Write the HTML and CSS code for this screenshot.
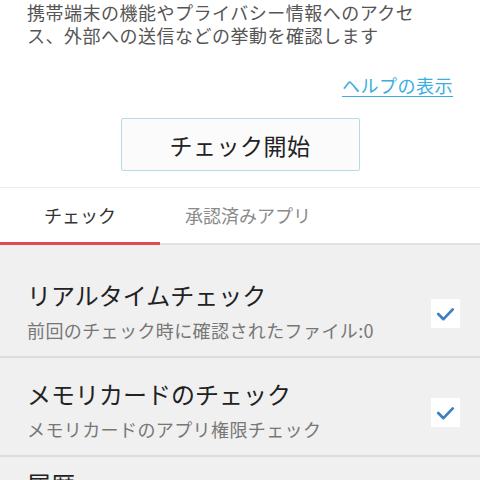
FILE: index.html
```html
<!DOCTYPE html>
<html lang="ja">
<head>
<meta charset="utf-8">
<link rel="stylesheet" href="styles.css">
</head>
<body>
<div class="page">
  <p class="intro">携帯端末の機能やプライバシー情報へのアクセス、外部への送信などの挙動を確認します</p>
  <div class="help-row"><a class="help" href="#">ヘルプの表示</a></div>
  <div class="btn-row"><button class="start">チェック開始</button></div>
  <div class="tabs">
    <div class="tab active">チェック</div>
    <div class="tab">承認済みアプリ</div>
  </div>
  <div class="list">
    <div class="item">
      <div class="texts">
        <div class="title">リアルタイムチェック</div>
        <div class="sub">前回のチェック時に確認されたファイル:0</div>
      </div>
      <div class="check"><svg viewBox="0 0 28 28" width="29" height="29"><polyline points="7,14.5 12,19.5 21,10" fill="none" stroke="#3d7fc1" stroke-width="2.6" stroke-linecap="round" stroke-linejoin="round"/></svg></div>
    </div>
    <div class="item">
      <div class="texts">
        <div class="title">メモリカードのチェック</div>
        <div class="sub">メモリカードのアプリ権限チェック</div>
      </div>
      <div class="check"><svg viewBox="0 0 28 28" width="29" height="29"><polyline points="7,14.5 12,19.5 21,10" fill="none" stroke="#3d7fc1" stroke-width="2.6" stroke-linecap="round" stroke-linejoin="round"/></svg></div>
    </div>
    <div class="item last">
      <div class="texts">
        <div class="title">履歴</div>
      </div>
    </div>
  </div>
</div>
</body>
</html>
```
FILE: styles.css
```css
html, body {
  margin: 0;
  padding: 0;
  background: #ffffff;
}
body {
  font-family: "Noto Sans CJK JP", "Noto Sans", sans-serif;
  width: 480px;
  height: 480px;
  overflow: hidden;
}
.page {
  display: flex;
  flex-direction: column;
}
.intro {
  margin: 0;
  padding: 1px 50px 0 27px;
  font-size: 18px;
  line-height: 23px;
  color: #555555;
  letter-spacing: 0.5px;
}
.help-row {
  display: flex;
  justify-content: flex-end;
  padding-right: 27px;
  margin-top: 27px;
}
.help {
  font-size: 18px;
  line-height: 23px;
  color: #3aaee2;
  text-decoration: underline;
  text-underline-offset: 3px;
  letter-spacing: 0.5px;
}
.btn-row {
  display: flex;
  justify-content: center;
  margin-top: 21px;
}
.start {
  width: 239px;
  height: 53px;
  background: #fbfbfb;
  border: 1.5px solid #b6dbe8;
  border-radius: 2px;
  font-family: "Noto Sans CJK JP", sans-serif;
  font-size: 23px;
  letter-spacing: 0.5px;
  color: #222222;
  padding: 0;
}
.tabs {
  display: flex;
  margin-top: 16px;
  border-top: 1px solid #ececec;
  border-bottom: 2px solid #e2e2e2;
}
.tab {
  height: 54px;
  display: flex;
  align-items: center;
  justify-content: center;
  font-size: 18px;
  color: #8a8a8a;
  border-bottom: 3px solid transparent;
  margin-bottom: -2px;
}
.tab:first-child {
  width: 160px;
}
.tab:nth-child(2) {
  width: 176px;
}
.tab.active {
  color: #333333;
  border-bottom-color: #e04a52;
}
.list {
  background: #f0f0f0;
  padding-top: 14px;
  flex: 1;
}
.item {
  display: flex;
  align-items: center;
  padding: 21px 20px 14px 27px;
  border-bottom: 2px solid #dcdcdc;
}
.item.last {
  padding-top: 12px;
  border-bottom: none;
}
.texts {
  flex: 1;
  display: flex;
  flex-direction: column;
  gap: 8px;
}
.title {
  font-size: 24px;
  line-height: 30px;
  color: #222222;
}
.sub {
  font-size: 18px;
  line-height: 24px;
  color: #777777;
  letter-spacing: 0.4px;
}
.check {
  width: 29px;
  height: 29px;
  background: #ffffff;
  margin-top: 4px;
  display: flex;
}
```
